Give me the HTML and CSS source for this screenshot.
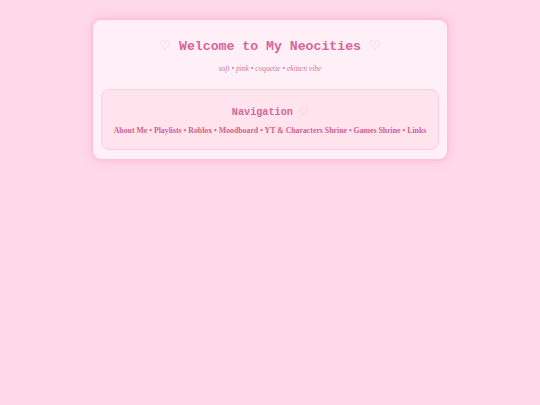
FILE: index.html
```html
<!DOCTYPE html>
<html>
<head>
<meta charset="utf-8">
<link rel="stylesheet" href="styles.css">
</head>
<body>
<div class="card">
  <h1 class="title"><span class="heart">♡</span> Welcome to My Neocities <span class="heart">♡</span></h1>
  <p class="subtitle">soft • pink • coquette • ekitten vibe</p>
  <div class="nav">
    <h2 class="nav-title">Navigation <span class="heart">♡</span></h2>
    <p class="links"><a href="#">About Me</a> • <a href="#">Playlists</a> • <a href="#">Roblox</a> • <a href="#">Moodboard</a> • <a href="#">YT &amp; Characters Shrine</a> • <a href="#">Games Shrine</a> • <a href="#">Links</a></p>
  </div>
</div>
</body>
</html>
```
FILE: styles.css
```css
html, body {
  margin: 0;
  padding: 0;
}
* {
  box-sizing: border-box;
}
body {
  background: #ffd9e8;
  font-family: "Liberation Serif", serif;
  padding: 18px 0;
}
.card {
  width: 358px;
  margin: 0 auto;
  background: #fff0f7;
  border: 2px solid #ffc4dc;
  border-radius: 10px;
  box-shadow: 0 0 8px rgba(255, 165, 202, 0.55);
  padding: 17px 8px 9px;
  text-align: center;
}
.title {
  font-family: "Liberation Mono", monospace;
  font-weight: bold;
  font-size: 13.2px;
  color: #d8649a;
  margin: 0;
  line-height: 20px;
}
.heart {
  color: #f5b0cc;
  font-weight: normal;
  font-family: "Liberation Mono", "DejaVu Sans", sans-serif;
}
.subtitle {
  font-style: italic;
  font-size: 7.5px;
  line-height: 10px;
  color: #c97a9e;
  margin: 7px 0 15px;
}
.nav {
  background: #ffe4ee;
  border: 1px solid #ffcce0;
  border-radius: 8px;
  padding: 15px 4px 13px;
}
.nav-title {
  font-family: "Liberation Mono", monospace;
  font-weight: bold;
  font-size: 10.2px;
  color: #d3679a;
  margin: 0 0 5px;
  line-height: 16px;
}
.links {
  margin: 0;
  font-size: 7.8px;
  line-height: 10px;
  font-weight: bold;
  color: #d86a98;
}
.links a {
  color: #d2608f;
  text-decoration: none;
}
```
